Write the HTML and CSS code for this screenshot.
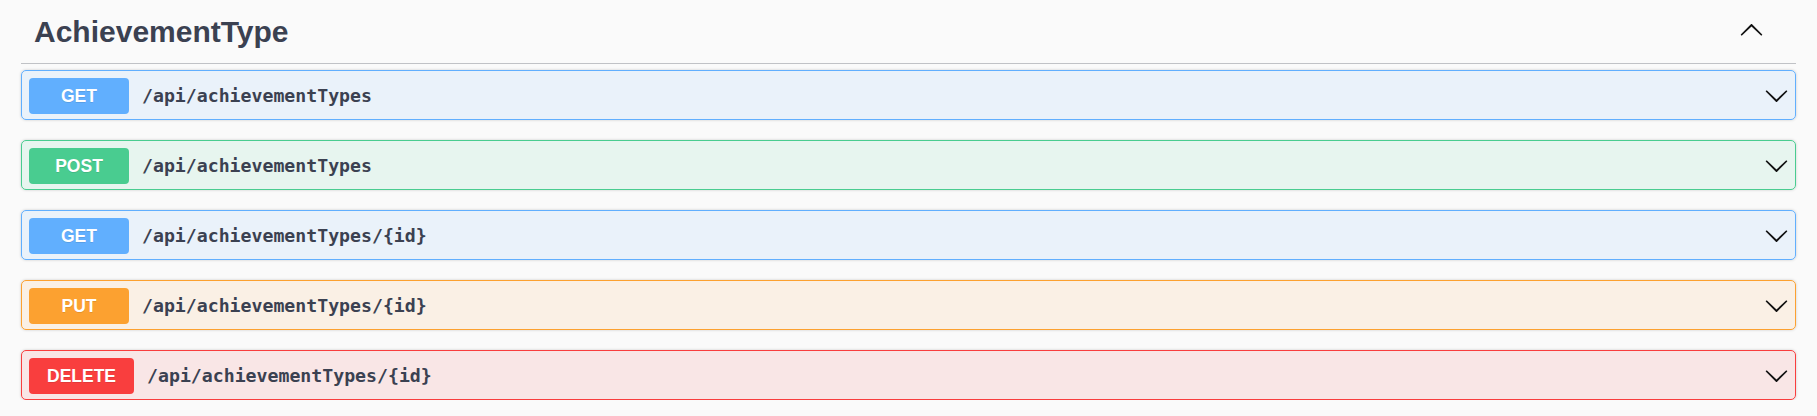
FILE: index.html
```html
<!DOCTYPE html>
<html>
<head>
<meta charset="utf-8">
<link rel="stylesheet" href="styles.css">
</head>
<body>
<div class="wrapper">
  <div class="tag-section">
    <div class="tag-row">
      <h3 class="tag-title">AchievementType</h3>
      <svg class="arrow arrow-up" viewBox="0 0 20 20" width="25" height="25"><path d="M17.418 6.109c.272-.268.709-.268.979 0s.271.701 0 .969l-7.908 7.83c-.27.268-.707.268-.979 0l-7.908-7.830c-.27-.268-.27-.701 0-.969.271-.268.709-.268.979 0L10 13.25l7.418-7.141z"/></svg>
    </div>
    <div class="ops">
      <div class="opblock get">
        <span class="method">GET</span>
        <span class="path">/api/achievementTypes</span>
        <svg class="arrow" viewBox="0 0 20 20" width="25" height="25"><path d="M17.418 6.109c.272-.268.709-.268.979 0s.271.701 0 .969l-7.908 7.83c-.27.268-.707.268-.979 0l-7.908-7.83c-.27-.268-.27-.701 0-.969.271-.268.709-.268.979 0L10 13.25l7.418-7.141z"/></svg>
      </div>
      <div class="opblock post">
        <span class="method">POST</span>
        <span class="path">/api/achievementTypes</span>
        <svg class="arrow" viewBox="0 0 20 20" width="25" height="25"><path d="M17.418 6.109c.272-.268.709-.268.979 0s.271.701 0 .969l-7.908 7.83c-.27.268-.707.268-.979 0l-7.908-7.83c-.27-.268-.27-.701 0-.969.271-.268.709-.268.979 0L10 13.25l7.418-7.141z"/></svg>
      </div>
      <div class="opblock get">
        <span class="method">GET</span>
        <span class="path">/api/achievementTypes/{id}</span>
        <svg class="arrow" viewBox="0 0 20 20" width="25" height="25"><path d="M17.418 6.109c.272-.268.709-.268.979 0s.271.701 0 .969l-7.908 7.83c-.27.268-.707.268-.979 0l-7.908-7.83c-.27-.268-.27-.701 0-.969.271-.268.709-.268.979 0L10 13.25l7.418-7.141z"/></svg>
      </div>
      <div class="opblock put">
        <span class="method">PUT</span>
        <span class="path">/api/achievementTypes/{id}</span>
        <svg class="arrow" viewBox="0 0 20 20" width="25" height="25"><path d="M17.418 6.109c.272-.268.709-.268.979 0s.271.701 0 .969l-7.908 7.83c-.27.268-.707.268-.979 0l-7.908-7.83c-.27-.268-.27-.701 0-.969.271-.268.709-.268.979 0L10 13.25l7.418-7.141z"/></svg>
      </div>
      <div class="opblock delete">
        <span class="method">DELETE</span>
        <span class="path">/api/achievementTypes/{id}</span>
        <svg class="arrow" viewBox="0 0 20 20" width="25" height="25"><path d="M17.418 6.109c.272-.268.709-.268.979 0s.271.701 0 .969l-7.908 7.83c-.27.268-.707.268-.979 0l-7.908-7.83c-.27-.268-.27-.701 0-.969.271-.268.709-.268.979 0L10 13.25l7.418-7.141z"/></svg>
      </div>
    </div>
  </div>
</div>
</body>
</html>
```

FILE: styles.css
```css
html, body {
  margin: 0;
  padding: 0;
  background: #fafafa;
}

body {
  font-family: "Liberation Sans", Arial, sans-serif;
  color: #3b4151;
}

.wrapper {
  padding: 0 21px;
}

.tag-row {
  display: flex;
  align-items: center;
  padding: 12.5px 32px 12.5px 13px;
  border-bottom: 1px solid rgba(59, 65, 81, 0.3);
  margin-bottom: 6px;
}

.tag-title {
  flex: 1;
  margin: 0;
  font-size: 30px;
  line-height: 38px;
  font-weight: 700;
  color: #3b4151;
}

.arrow {
  flex: none;
  display: block;
  fill: #111;
}

.arrow-up {
  transform: rotate(180deg);
  margin-top: -3px;
}

.ops {
  display: flex;
  flex-direction: column;
  gap: 20px;
}

.opblock {
  display: flex;
  align-items: center;
  height: 50px;
  box-sizing: border-box;
  padding: 1px 6px 0 7px;
  border: 1px solid;
  border-radius: 5px;
  box-shadow: 0 0 3px rgba(0, 0, 0, 0.19);
}

.method {
  min-width: 100px;
  box-sizing: border-box;
  padding: 9px 18px;
  border-radius: 4px;
  color: #fff;
  font-family: "Liberation Sans", Arial, sans-serif;
  font-weight: 700;
  font-size: 17.5px;
  line-height: 18px;
  text-align: center;
  text-shadow: 0 1px 0 rgba(0, 0, 0, 0.1);
}

.path {
  flex: 1;
  margin-left: 13px;
  font-family: "DejaVu Sans Mono", "Liberation Mono", monospace;
  font-weight: 700;
  font-size: 18.2px;
  color: #3b4151;
}

.get { background: rgba(97, 175, 254, 0.1); border-color: #61affe; }
.get .method { background: #61affe; }

.post { background: rgba(73, 204, 144, 0.1); border-color: #49cc90; }
.post .method { background: #49cc90; }

.put { background: rgba(252, 161, 48, 0.1); border-color: #fca130; }
.put .method { background: #fca130; }

.delete { background: rgba(249, 62, 62, 0.1); border-color: #f93e3e; }
.delete .method { background: #f93e3e; }
```
